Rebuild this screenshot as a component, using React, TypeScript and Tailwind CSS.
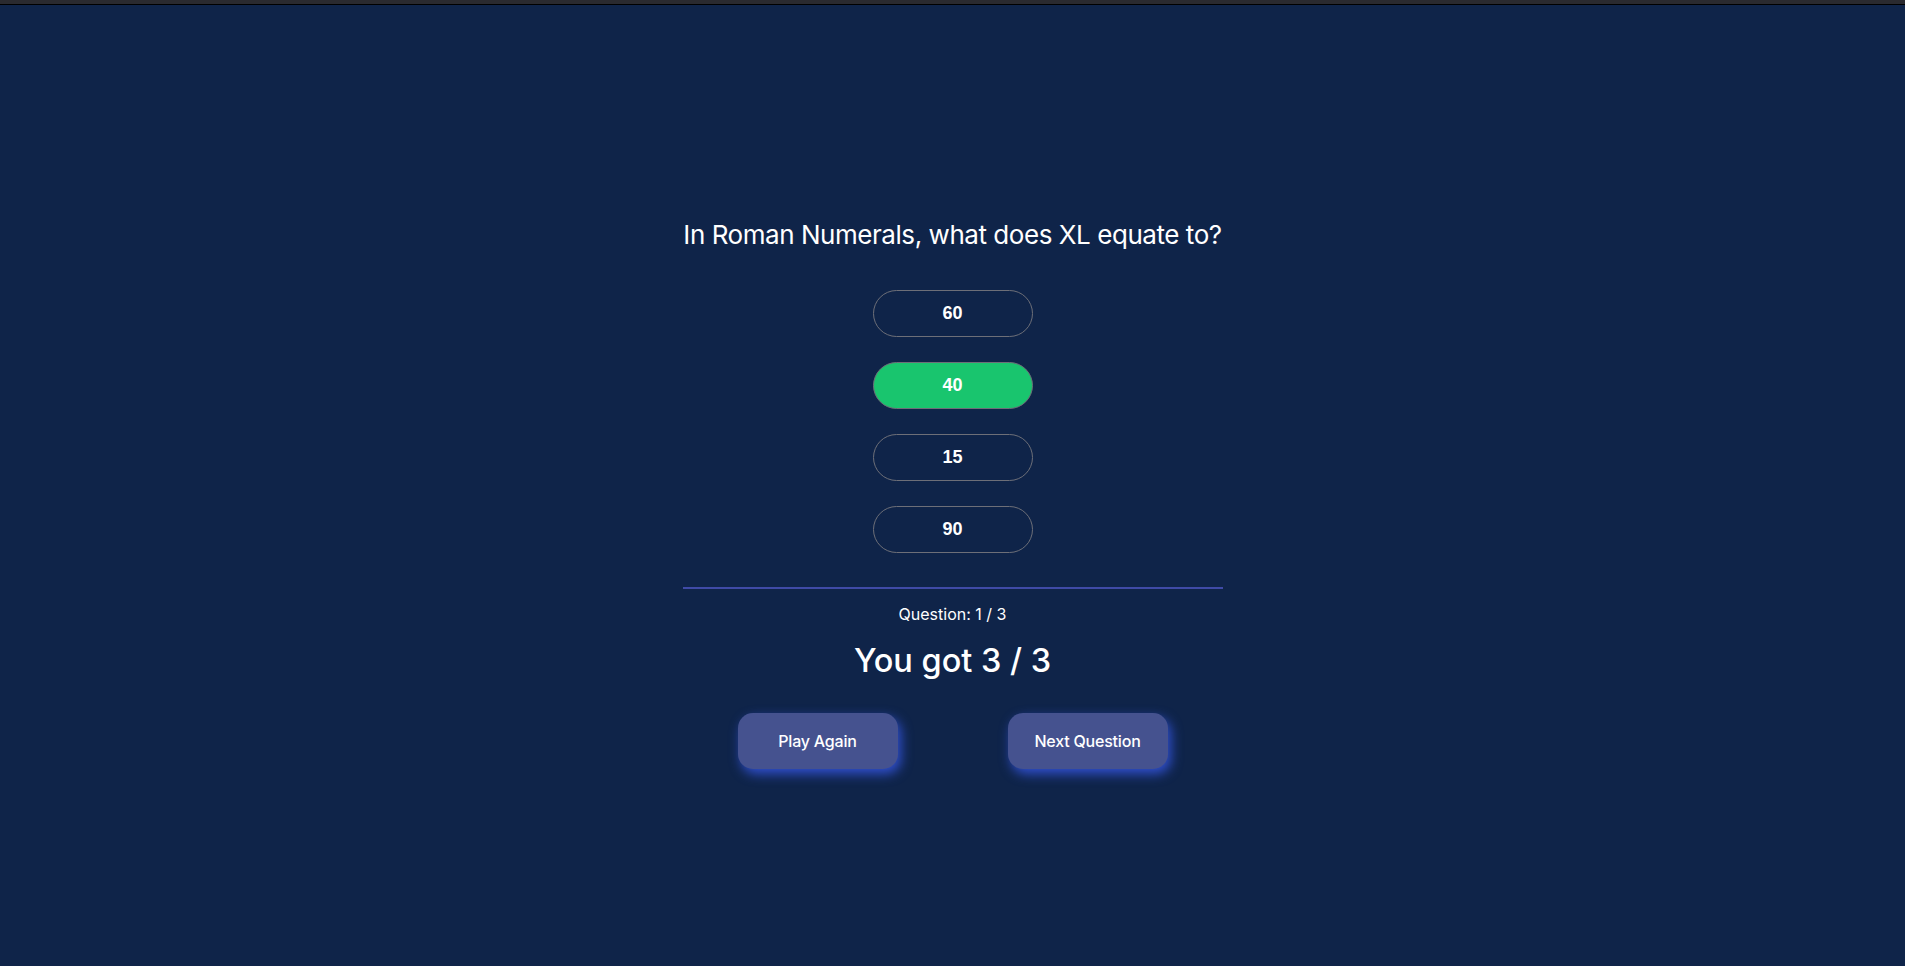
import React, { useState } from "react";

const answers: string[] = ["60", "40", "15", "90"];

function App(): React.ReactElement {
  const [selected] = useState<string>("40");

  return (
    <div className="min-h-screen w-full bg-[#0f2449] flex flex-col">
      {/* browser strip */}
      <div className="h-[4px] bg-[#2a2a2f]" />
      <div className="h-px bg-black" />

      <div className="flex flex-col items-center pt-[214px]">
        <div className="w-[540px] flex flex-col items-center">
          <p className="font-['Inter',sans-serif] text-[26px] leading-[32px] tracking-[-0.45px] text-white font-normal text-center whitespace-nowrap">
            In Roman Numerals, what does XL equate to?
          </p>

          {/* Answers */}
          <div className="flex flex-col items-center gap-[25px] mt-[39px]">
            {answers.map((answer) => (
              <button
                key={answer}
                className={`w-[160px] h-[47px] rounded-full border border-[#6d6f78] font-['Liberation_Sans',Arial,sans-serif] font-bold text-[18px] text-white ${
                  selected === answer ? "bg-[#19c56e]" : "bg-transparent"
                }`}
              >
                {answer}
              </button>
            ))}
          </div>

          <div className="w-full h-[2px] bg-[#3f4aa6] mt-[34px]" />

          <p className="font-['Inter',sans-serif] text-[16px] leading-[22px] text-white mt-[14px]">
            Question: 1 / 3
          </p>

          <h2 className="font-['Inter',sans-serif] text-[32.5px] leading-[40px] font-medium text-white mt-[16px]">
            You got 3 / 3
          </h2>

          {/* Controls */}
          <div className="flex items-center gap-[110px] mt-[32px]">
            <button className="w-[160px] h-[56px] rounded-[15px] bg-[#45528f] text-white text-[16px] tracking-[-0.2px] font-medium font-['Inter',sans-serif] shadow-[3px_5px_12px_rgba(52,84,220,0.9)]">
              Play Again
            </button>
            <button className="w-[160px] h-[56px] rounded-[15px] bg-[#45528f] text-white text-[16px] tracking-[-0.2px] font-medium font-['Inter',sans-serif] shadow-[3px_5px_12px_rgba(52,84,220,0.9)]">
              Next Question
            </button>
          </div>
        </div>
      </div>
    </div>
  );
}

export default App;
